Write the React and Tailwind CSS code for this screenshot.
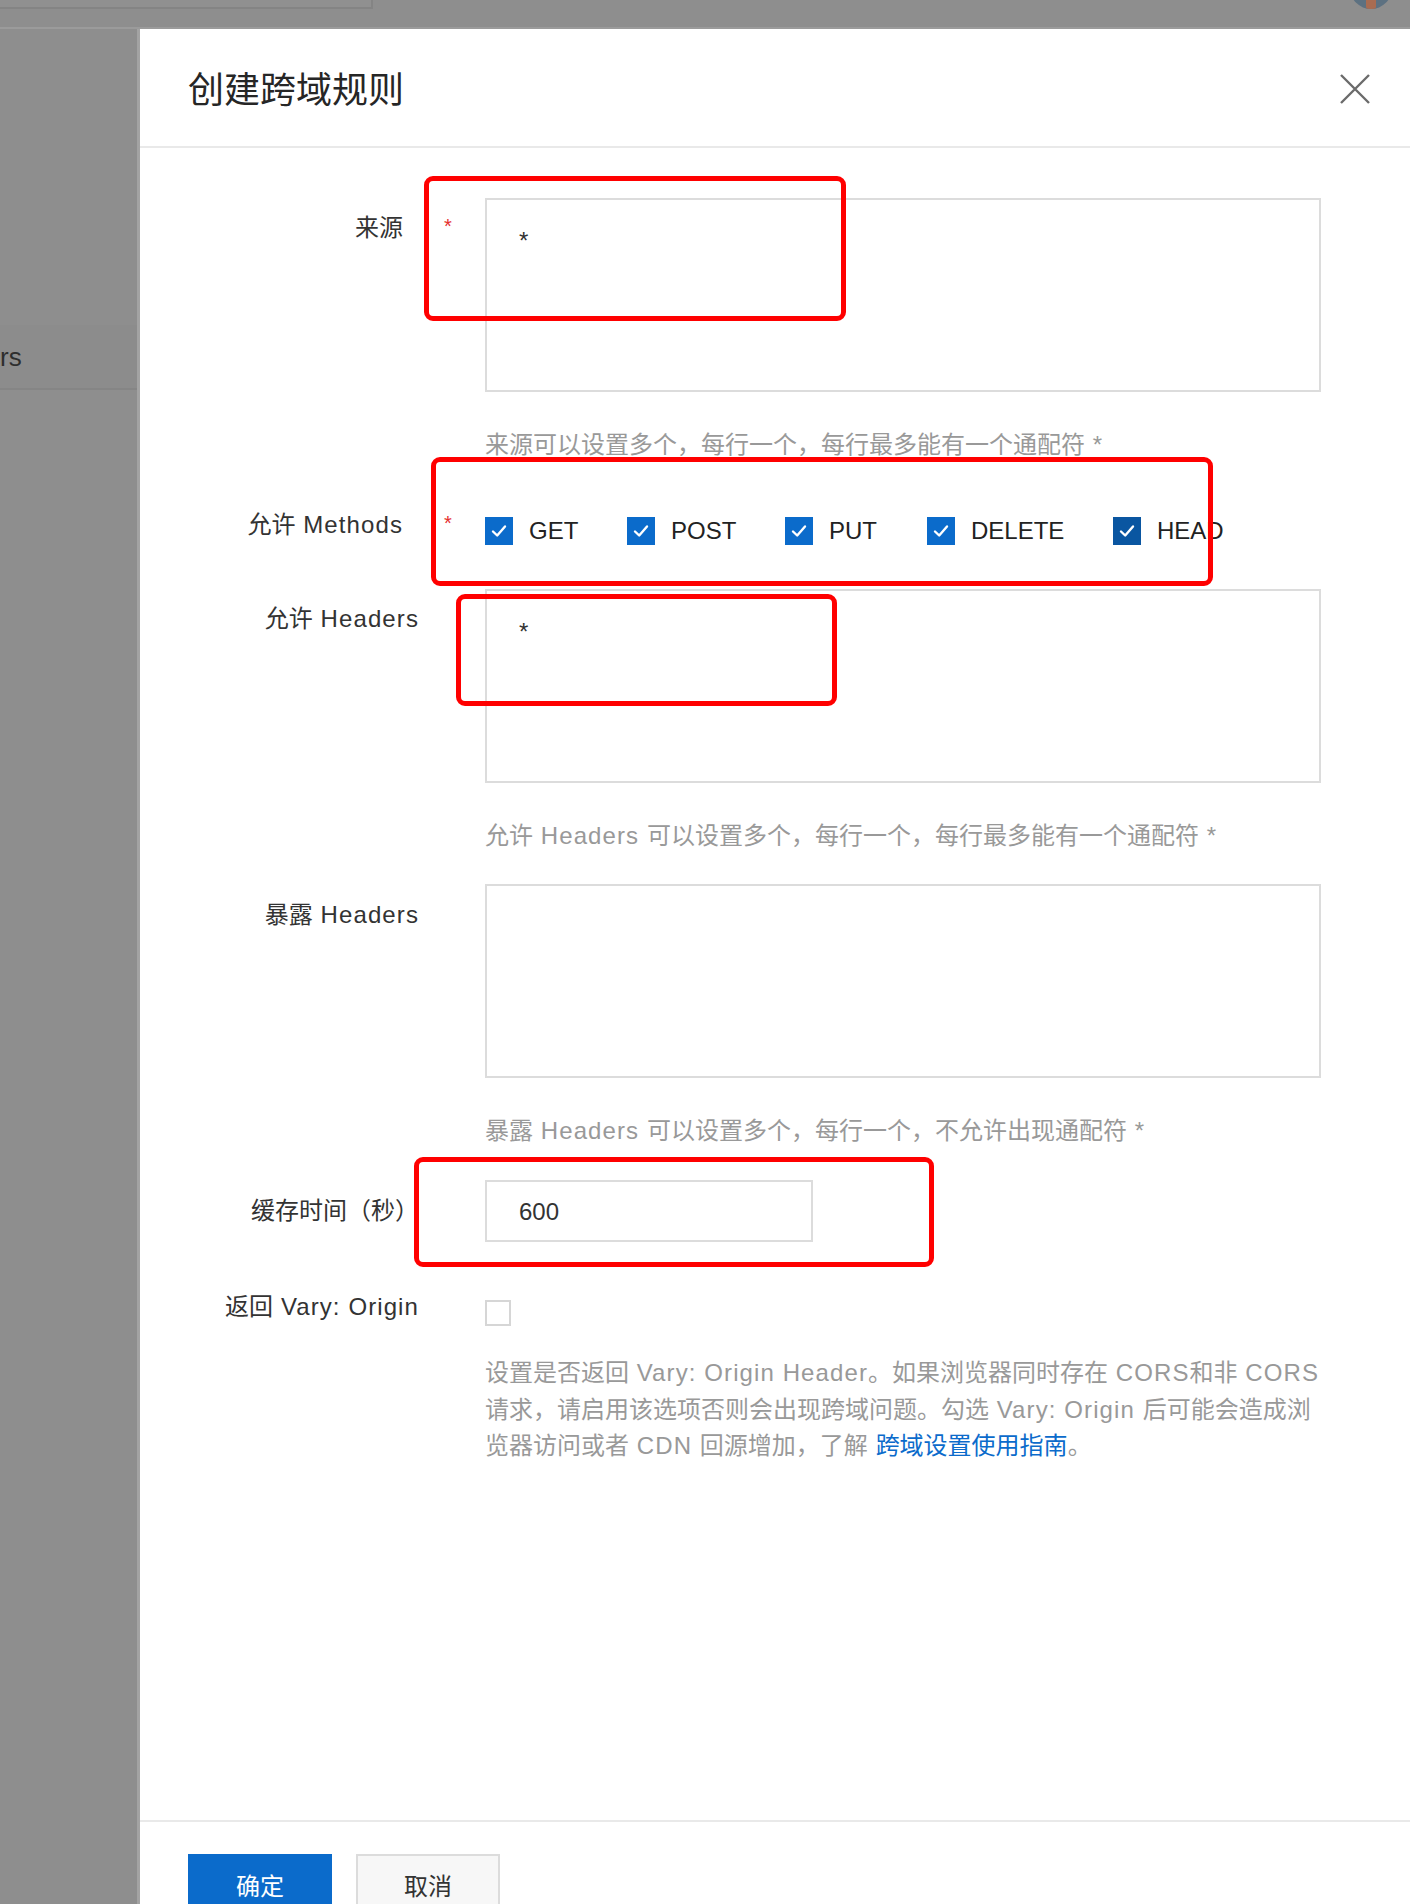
import React from "react";

const FONT = "[font-family:'Liberation_Sans','Noto_Sans_CJK_SC',sans-serif]";

// Latin runs in the reference font are a little wider than Liberation Sans: widen them slightly.
function tr(s) {
  return s.split(/([\x20-\x7E]+)/).map((p, i) =>
    /^[\x20-\x7E]+$/.test(p) ? (
      <span key={i} className="tracking-[1.1px]">
        {p}
      </span>
    ) : (
      p
    )
  );
}

function Check({ dark }) {
  return (
    <span
      className={
        dark
          ? "flex h-[28px] w-[28px] shrink-0 items-center justify-center bg-[#0a56a1]"
          : "flex h-[28px] w-[28px] shrink-0 items-center justify-center bg-[#0b6bcb]"
      }
    >
      <svg width="20" height="20" viewBox="0 0 20 20" fill="none">
        <path d="M4 10.5 L8.2 14.5 L16 5.5" stroke="white" strokeWidth="2.4" strokeLinecap="round" strokeLinejoin="round" />
      </svg>
    </span>
  );
}

function Label({ children, required, className = "" }) {
  return (
    <div
      className={
        "w-[279px] shrink-0 whitespace-nowrap text-right text-[24px] leading-[36px] text-[#333] " +
        (required ? "pr-[16px] " : "") +
        className
      }
    >
      {tr(children)}
    </div>
  );
}

function Star({ className = "" }) {
  return (
    <div className={"w-[66px] shrink-0 pl-[25px] text-[20px] leading-[20px] text-[#e52e2e] " + className}>*</div>
  );
}

function Gap() {
  return <div className="w-[66px] shrink-0" />;
}

function Hint({ children }) {
  return <div className="mt-[35px] whitespace-nowrap text-[24px] leading-[36px] text-[#999]">{tr(children)}</div>;
}

function Area({ value }) {
  return (
    <div className="h-[194px] w-[836px] border-2 border-[#dcdcdc] pl-[32px] pt-[29px] text-[24px] leading-[24px] text-[#333]">
      {value}
    </div>
  );
}

const METHODS = [
  { name: "GET", w: "w-[142px]" },
  { name: "POST", w: "w-[158px]" },
  { name: "PUT", w: "w-[142px]" },
  { name: "DELETE", w: "w-[186px]" },
  { name: "HEAD", w: "" },
];

export default function App() {
  return (
    <div className={"relative h-[1904px] w-[1410px] overflow-hidden bg-[#8e8e8e] " + FONT}>
      {/* top bar */}
      <div className="relative h-[29px] border-b-2 border-[#9b9b9b]">
        <div className="h-[9px] w-[373px] border-b-2 border-r-2 border-[#848484] bg-[#909090]" />
        <div className="absolute left-[1350px] top-[-33px] h-[42px] w-[42px] overflow-hidden rounded-full bg-[#5d7181]">
          <div className="mx-auto mt-[26px] h-[16px] w-[10px] rounded-[2px] bg-[#a86c52]" />
        </div>
      </div>

      <div className="flex h-[1875px]">
        {/* sidebar under mask */}
        <aside className="w-[140px] shrink-0 border-r-[3px] border-[#a3a3a3]">
          <div className="h-[296px]" />
          <div className="flex h-[65px] items-center border-b-2 border-[#858585] bg-[#8c8c8c]">
            <span className="text-[26px] leading-[26px] text-[#2e2e2e]">rs</span>
          </div>
        </aside>

        {/* drawer */}
        <section className="flex flex-1 flex-col bg-white">
          <header className="flex h-[119px] shrink-0 items-center justify-between border-b-2 border-[#e9e9e9] pl-[48px] pr-[39px]">
            <h1 className="mt-[6px] text-[36px] leading-[40px] text-[#262626]">创建跨域规则</h1>
            <svg className="mt-[2px]" width="32" height="32" viewBox="0 0 32 32" fill="none">
              <path d="M2 2 L30 30 M30 2 L2 30" stroke="#6b6b6b" strokeWidth="2.4" />
            </svg>
          </header>

          <div className="h-[1672px] shrink-0 pt-[50px]">
            {/* 来源 */}
            <div className="flex">
              <Label required className="pt-[12px]">来源</Label>
              <Star className="pt-[18px]" />
              <div className="w-[836px]">
                <Area value="*" />
                <Hint>来源可以设置多个，每行一个，每行最多能有一个通配符 *</Hint>
              </div>
            </div>

            {/* Methods */}
            <div className="mt-[44px] flex">
              <Label required>允许 Methods</Label>
              <Star className="pt-[6px]" />
              <div className="flex pt-[10px]">
                {METHODS.map((m, i) => (
                  <div key={m.name} className={"flex items-center gap-[16px] " + m.w}>
                    <Check dark={i === 4} />
                    <span className="text-[24px] leading-[28px] text-[#222]">{m.name}</span>
                  </div>
                ))}
              </div>
            </div>

            {/* 允许 Headers */}
            <div className="mt-[44px] flex">
              <Label className="pt-[12px]">允许 Headers</Label>
              <Gap />
              <div className="w-[836px]">
                <Area value="*" />
                <Hint>允许 Headers 可以设置多个，每行一个，每行最多能有一个通配符 *</Hint>
              </div>
            </div>

            {/* 暴露 Headers */}
            <div className="mt-[30px] flex">
              <Label className="pt-[13px]">暴露 Headers</Label>
              <Gap />
              <div className="w-[836px]">
                <Area value="" />
                <Hint>暴露 Headers 可以设置多个，每行一个，不允许出现通配符 *</Hint>
              </div>
            </div>

            {/* 缓存时间 */}
            <div className="mt-[31px] flex items-center">
              <Label>缓存时间（秒）</Label>
              <Gap />
              <div className="flex h-[62px] w-[328px] items-center border-2 border-[#dcdcdc] pl-[32px] pt-[2px] text-[24px] text-[#333]">
                600
              </div>
            </div>

            {/* Vary */}
            <div className="mt-[47px] flex">
              <Label>返回 Vary: Origin</Label>
              <Gap />
              <div className="w-[836px]">
                <div className="mt-[11px] h-[26px] w-[26px] border-2 border-[#d6d6d6] bg-white" />
                <p className="mt-[29px] whitespace-nowrap text-[24px] leading-[36.5px] text-[#999]">
                  {tr("设置是否返回 Vary: Origin Header。如果浏览器同时存在 CORS和非 CORS")}
                  <br />
                  {tr("请求，请启用该选项否则会出现跨域问题。勾选 Vary: Origin 后可能会造成浏")}
                  <br />
                  {tr("览器访问或者 CDN 回源增加，了解 ")}
                  <span className="text-[#0b6bcb]">跨域设置使用指南</span>。
                </p>
              </div>
            </div>
          </div>

          <footer className="flex gap-[24px] border-t-2 border-[#e9e9e9] pl-[48px] pt-[32px]">
            <button className="flex h-[66px] w-[144px] items-center justify-center bg-[#0b6bcb] text-[24px] text-white">
              确定
            </button>
            <button className="flex h-[66px] w-[144px] items-center justify-center border-2 border-[#dcdcdc] bg-[#f7f7f7] text-[24px] text-[#333]">
              取消
            </button>
          </footer>
        </section>
      </div>

      {/* red annotation boxes */}
      <div className="pointer-events-none absolute left-[424px] top-[176px] h-[145px] w-[422px] rounded-[9px] border-[5px] border-[#ff0000]" />
      <div className="pointer-events-none absolute left-[431px] top-[457px] h-[129px] w-[782px] rounded-[9px] border-[5px] border-[#ff0000]" />
      <div className="pointer-events-none absolute left-[456px] top-[594px] h-[112px] w-[381px] rounded-[9px] border-[5px] border-[#ff0000]" />
      <div className="pointer-events-none absolute left-[414px] top-[1157px] h-[110px] w-[520px] rounded-[9px] border-[5px] border-[#ff0000]" />
    </div>
  );
}
